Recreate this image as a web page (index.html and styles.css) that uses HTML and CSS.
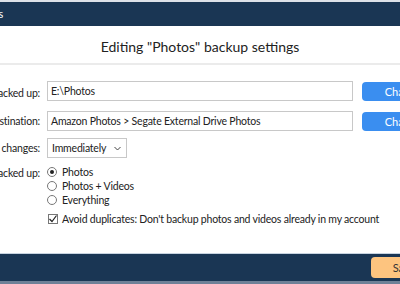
FILE: index.html
```html
<!DOCTYPE html>
<html lang="en">
<head>
    <meta charset="UTF-8">
    <title>Editing "Photos" backup settings</title>
    <link rel="stylesheet" href="styles.css">
</head>
<body>
    <div class="topline"></div>
    <div class="titlebar"><span class="app-name">Backups</span></div>

    <div class="heading">Editing "Photos" backup settings</div>

    <div class="form">
        <label class="label">Folder being backed up:</label>
        <div class="field first">
            <div class="input">E:\Photos</div>
            <button class="button blue">Change</button>
        </div>

        <label class="label">Backup destination:</label>
        <div class="field">
            <div class="input">Amazon Photos &gt; Segate External Drive Photos</div>
            <button class="button blue">Change</button>
        </div>

        <label class="label">Back up changes:</label>
        <div class="field">
            <div class="select">Immediately
                <svg width="7" height="5" viewBox="0 0 7 5"><polyline points="0.5,1 3.5,4 6.5,1" fill="none" stroke="#444" stroke-width="1"/></svg>
            </div>
        </div>

        <label class="label top">What gets backed up:</label>
        <div class="options">
            <div class="radio-row"><span class="radio checked"></span>Photos</div>
            <div class="radio-row"><span class="radio"></span>Photos + Videos</div>
            <div class="radio-row"><span class="radio"></span>Everything</div>
            <div class="check-row">
                <span class="checkbox">
                    <svg width="10" height="10" viewBox="0 0 10 10"><polyline points="1.5,5 4,7.5 8.5,1.5" fill="none" stroke="#222" stroke-width="1.2"/></svg>
                </span>
                Avoid duplicates: Don't backup photos and videos already in my account
            </div>
        </div>
    </div>

    <div class="footer">
        <button class="button orange">Save</button>
    </div>
</body>
</html>
```

FILE: styles.css
```css
body {
    margin: 0;
    width: 400px;
    height: 284px;
    overflow: hidden;
    font-family: Lato, "Noto Sans", sans-serif;
    font-size: 10.5px;
    letter-spacing: -0.2px;
    color: #222;
    background: #fff;
    display: flex;
    flex-direction: column;
}
.topline {
    height: 2px;
    background: #dde2e8;
}
.titlebar {
    height: 24px;
    background: #1a3654;
    color: #fff;
    font-size: 11px;
    line-height: 24px;
    white-space: nowrap;
    overflow: hidden;
}
.app-name {
    display: inline-block;
    width: 60px;
    margin-left: -57px;
    text-align: right;
}
.heading {
    height: 37px;
    line-height: 41px;
    text-align: center;
    font-size: 14px;
    letter-spacing: 0;
    border-bottom: 2px solid #ebebeb;
}
.form {
    display: grid;
    grid-template-columns: 140px auto;
    column-gap: 7px;
    row-gap: 7px;
    margin-left: -100px;
    margin-top: 16px;
    align-items: center;
}
.label {
    text-align: right;
    white-space: nowrap;
}
.label.top {
    align-self: start;
    margin-top: 2px;
}
.field {
    display: flex;
    align-items: center;
    gap: 9px;
}
.field.first {
    margin-bottom: 3px;
}
.input {
    box-sizing: border-box;
    flex-shrink: 0;
    width: 306px;
    height: 20px;
    line-height: 18px;
    padding-left: 3px;
    border: 1px solid #c8c8c8;
    white-space: nowrap;
}
.button {
    flex-shrink: 0;
    font-family: inherit;
    font-size: 11px;
    letter-spacing: 0;
    border: none;
    border-radius: 4px;
    color: #fff;
    cursor: pointer;
    white-space: nowrap;
}
.button.blue {
    background-color: #3a8ef0;
    width: 82px;
    height: 19px;
    padding: 0;
}
.button.orange {
    background-color: #fdc47f;
    color: #333;
    width: 66px;
    height: 21px;
    padding: 0;
}
.select {
    box-sizing: border-box;
    display: flex;
    align-items: center;
    gap: 8px;
    height: 20px;
    padding: 0 5px 0 4px;
    border: 1px solid #c8c8c8;
}
.options {
    display: flex;
    flex-direction: column;
}
.radio-row {
    display: flex;
    align-items: center;
    height: 14px;
    gap: 5px;
}
.radio {
    box-sizing: border-box;
    width: 10px;
    height: 10px;
    border: 1px solid #777;
    border-radius: 50%;
    position: relative;
}
.radio.checked::after {
    content: "";
    position: absolute;
    left: 2px;
    top: 2px;
    width: 4px;
    height: 4px;
    border-radius: 50%;
    background: #222;
}
.check-row {
    display: flex;
    align-items: center;
    gap: 4px;
    margin-top: 6px;
    padding-left: 1px;
    white-space: nowrap;
}
.checkbox {
    box-sizing: border-box;
    width: 10px;
    height: 10px;
    border: 1px solid #777;
    display: flex;
}
.checkbox svg {
    margin: -1px;
}
.footer {
    margin-top: auto;
    height: 27px;
    background: #1a3654;
    border-top: 1px solid #c7d3e0;
    border-bottom: 3px solid #6e8097;
    display: flex;
    align-items: center;
    padding-left: 371px;
}
```
